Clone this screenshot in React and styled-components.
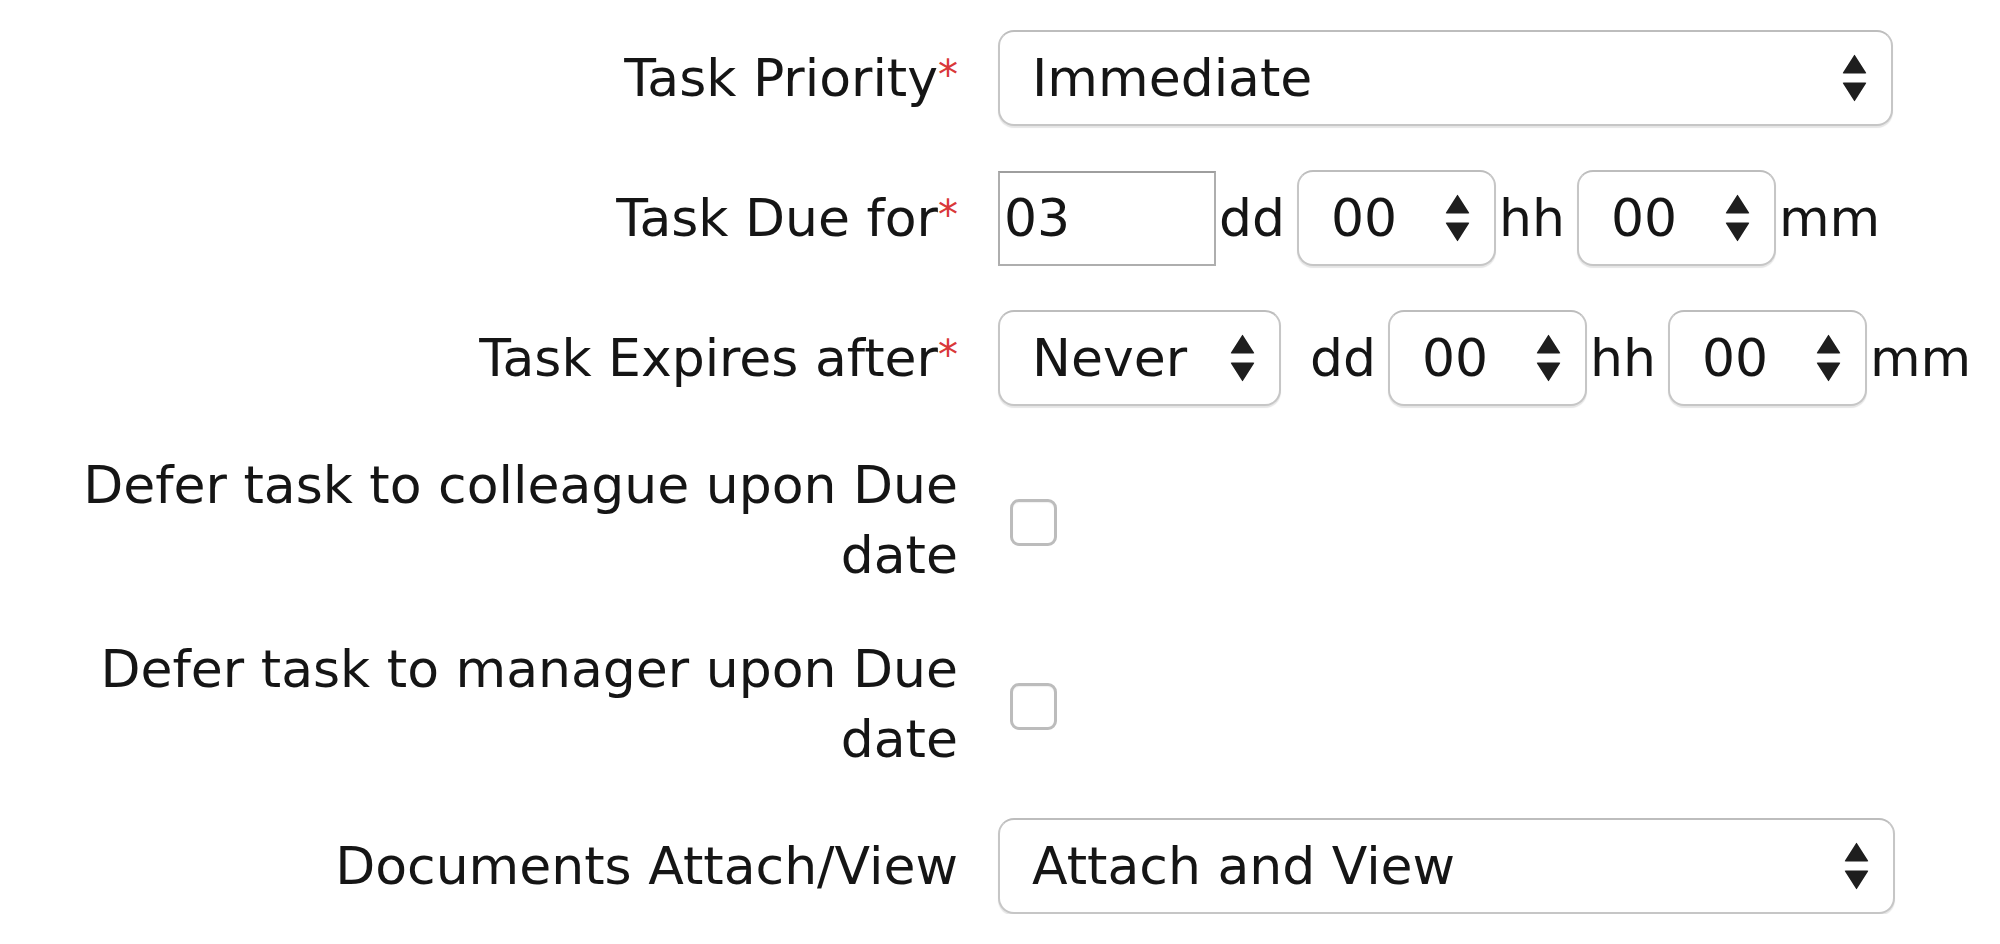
import React from 'react';
import styled, { createGlobalStyle } from 'styled-components';

const GlobalStyle = createGlobalStyle`
  html, body {
    margin: 0;
    padding: 0;
    background: #ffffff;
  }
  body {
    font-family: "DejaVu Sans", Verdana, sans-serif;
    color: #151515;
  }
`;

const Form = styled.form`
  display: flex;
  flex-direction: column;
  gap: 44px;
  padding: 30px 0 0 18px;
  font-size: 52px;
`;

const Row = styled.div`
  display: grid;
  grid-template-columns: 940px 1fr;
  column-gap: 40px;
  align-items: center;
  min-height: 96px;
`;

const Label = styled.label`
  text-align: right;
  line-height: 70px;
  color: #151515;
`;

const Required = styled.span`
  color: #d9383a;
  font-size: 40px;
  vertical-align: 7px;
  line-height: 0;
`;

const Controls = styled.div`
  display: flex;
  align-items: center;
`;

const SelectWrap = styled.div`
  position: relative;
  width: ${(p) => p.$width}px;
  margin-right: ${(p) => p.$after || 0}px;
`;

const Select = styled.select`
  appearance: none;
  -webkit-appearance: none;
  width: 100%;
  height: 96px;
  box-sizing: border-box;
  padding: 0 60px 0 32px;
  font-family: "DejaVu Sans", Verdana, sans-serif;
  font-size: 52px;
  color: #151515;
  background: #ffffff;
  border: 2px solid #c6c6c6;
  border-top-color: #bdbdbd;
  border-radius: 16px;
  box-shadow: 0 2px 1px rgba(0, 0, 0, 0.1);
  outline: none;
`;

const Arrows = styled.svg`
  position: absolute;
  right: 26px;
  top: 50%;
  transform: translateY(-50%);
  pointer-events: none;
`;

const NumberInput = styled.input`
  width: 218px;
  height: 95px;
  box-sizing: border-box;
  padding: 0 4px;
  font-family: "DejaVu Sans", Verdana, sans-serif;
  font-size: 52px;
  color: #151515;
  border: 2px solid #aeaeae;
  border-top-color: #9e9e9e;
  border-radius: 0;
  outline: none;
`;

const Unit = styled.span`
  margin: 0 12px 0 3px;
  line-height: 1;
  &:last-child {
    margin-right: 0;
  }
`;

const Check = styled.input`
  appearance: none;
  -webkit-appearance: none;
  width: 47px;
  height: 47px;
  margin: 4px 0 0 12px;
  box-sizing: border-box;
  border: 3px solid #bcbcbc;
  border-radius: 9px;
  background: #ffffff;
  box-shadow: inset 0 1px 1px rgba(0, 0, 0, 0.06);
`;

function Dropdown({ width, after, value, options }) {
  return (
    <SelectWrap $width={width} $after={after}>
      <Select defaultValue={value}>
        {options.map((o) => (
          <option key={o}>{o}</option>
        ))}
      </Select>
      <Arrows width="25" height="47" viewBox="0 0 25 47">
        <path d="M12.5 0 L24 18 Q25 19 23 19 L2 19 Q0 19 1 18 Z" fill="#1e1e1e" />
        <path d="M2 28 L23 28 Q25 28 24 29 L12.5 47 L1 29 Q0 28 2 28 Z" fill="#1e1e1e" />
      </Arrows>
    </SelectWrap>
  );
}

const hours = Array.from({ length: 24 }, (_, i) => String(i).padStart(2, '0'));
const minutes = Array.from({ length: 60 }, (_, i) => String(i).padStart(2, '0'));

export default function App() {
  return (
    <>
      <GlobalStyle />
      <Form>
        <Row>
          <Label>
            Task Priority<Required>*</Required>
          </Label>
          <Controls>
            <Dropdown width={895} value="Immediate" options={['Immediate', 'High', 'Normal', 'Low']} />
          </Controls>
        </Row>

        <Row>
          <Label>
            Task Due for<Required>*</Required>
          </Label>
          <Controls>
            <NumberInput type="text" defaultValue="03" />
            <Unit>dd</Unit>
            <Dropdown width={199} value="00" options={hours} />
            <Unit>hh</Unit>
            <Dropdown width={199} value="00" options={minutes} />
            <Unit>mm</Unit>
          </Controls>
        </Row>

        <Row>
          <Label>
            Task Expires after<Required>*</Required>
          </Label>
          <Controls>
            <Dropdown width={283} after={26} value="Never" options={['Never', '01', '02', '03']} />
            <Unit>dd</Unit>
            <Dropdown width={199} value="00" options={hours} />
            <Unit>hh</Unit>
            <Dropdown width={199} value="00" options={minutes} />
            <Unit>mm</Unit>
          </Controls>
        </Row>

        <Row>
          <Label>Defer task to colleague upon Due date</Label>
          <Controls>
            <Check type="checkbox" />
          </Controls>
        </Row>

        <Row>
          <Label>Defer task to manager upon Due date</Label>
          <Controls>
            <Check type="checkbox" />
          </Controls>
        </Row>

        <Row>
          <Label>Documents Attach/View</Label>
          <Controls>
            <Dropdown width={897} value="Attach and View" options={['Attach and View', 'Attach only', 'View only']} />
          </Controls>
        </Row>
      </Form>
    </>
  );
}
